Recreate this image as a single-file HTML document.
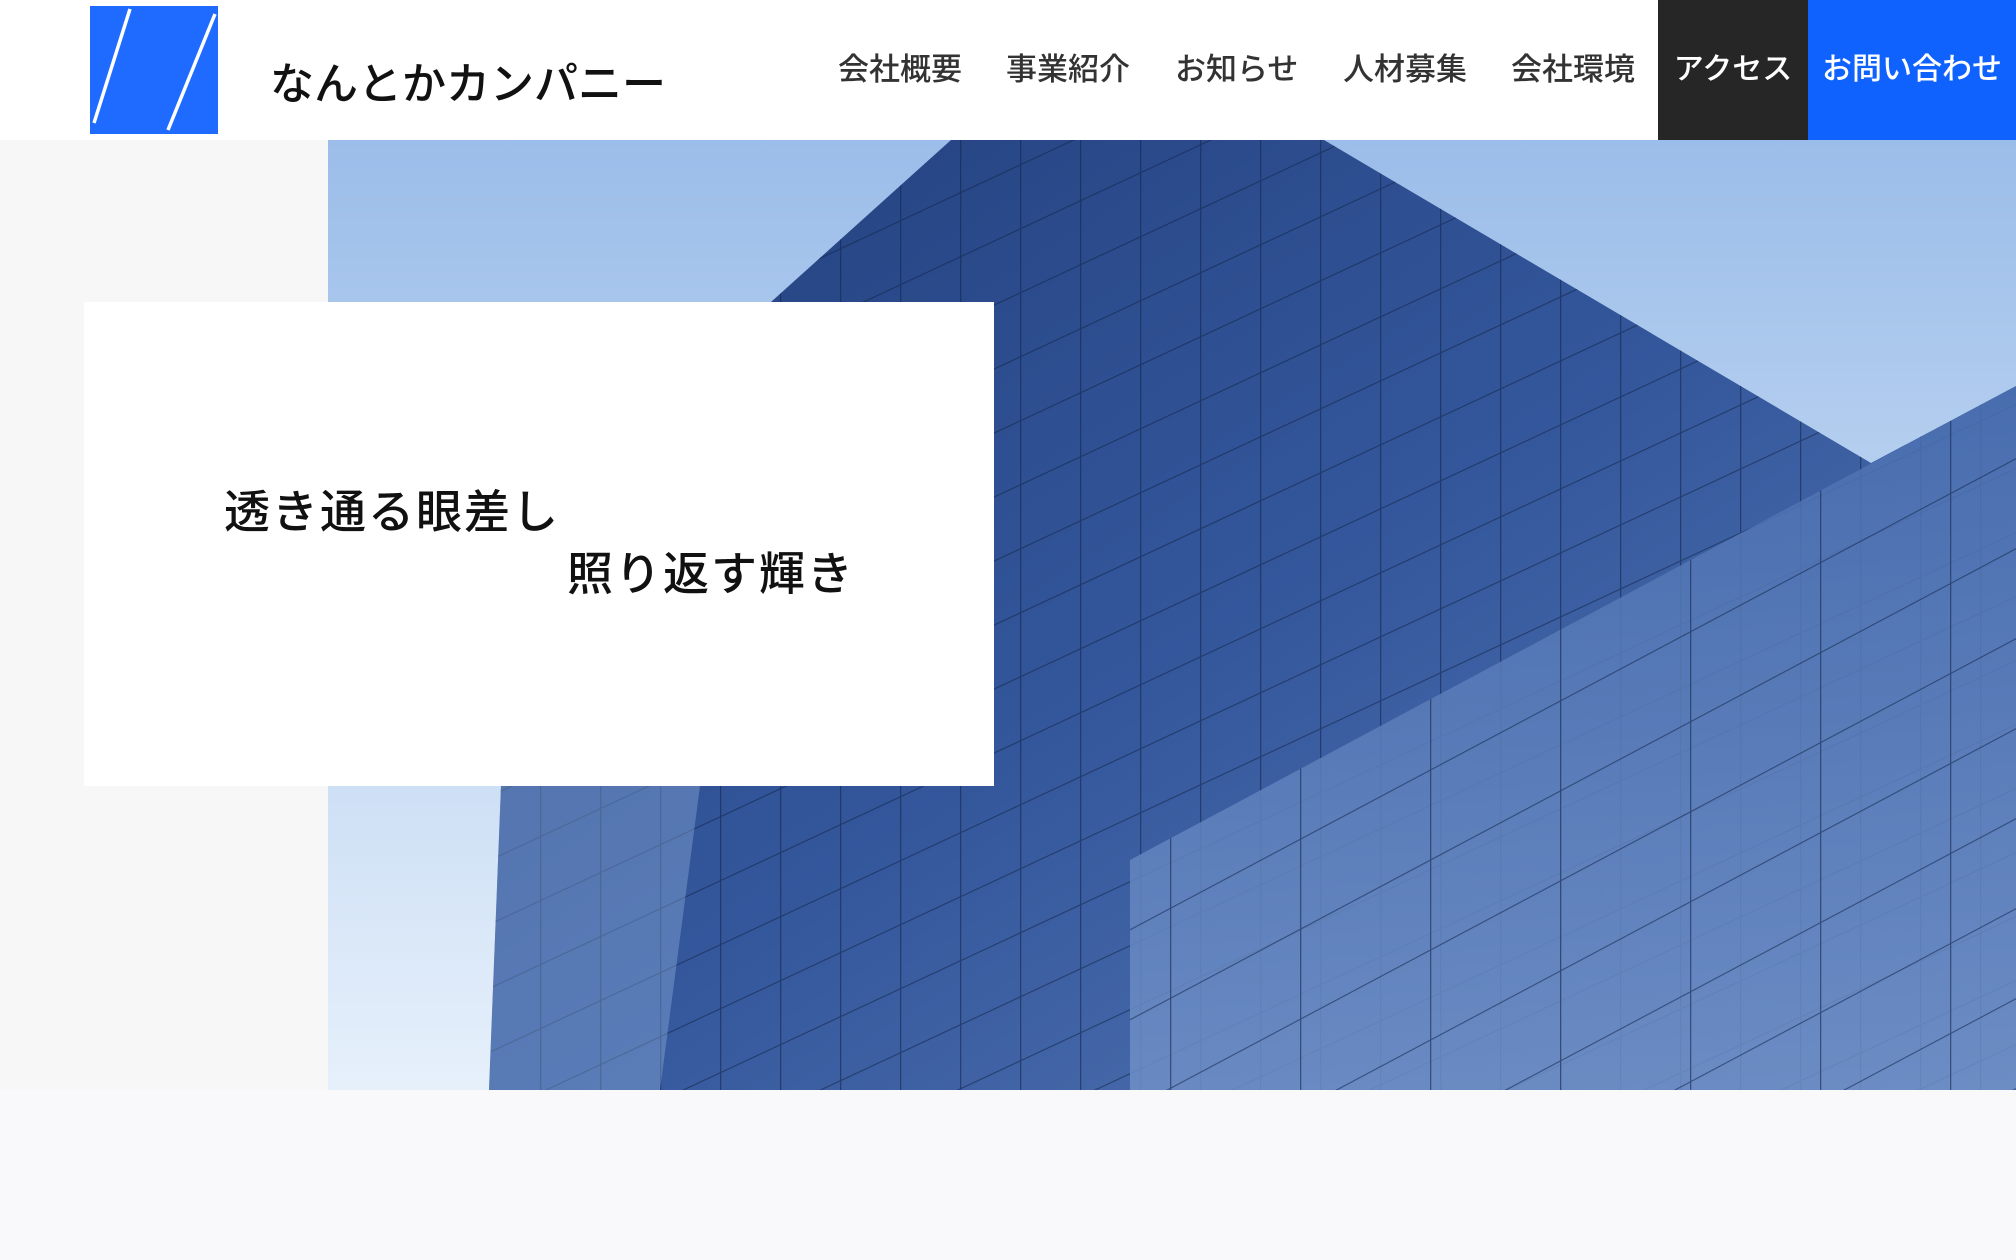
<!DOCTYPE html>
<html><head><meta charset="utf-8"><style>
*{margin:0;padding:0;box-sizing:border-box}
body{width:2016px;height:1260px;overflow:hidden;background:#f9f9fb;font-family:"Liberation Sans","Noto Sans CJK JP",sans-serif;position:relative}
header{position:absolute;left:0;top:0;width:2016px;height:140px;background:#fff}
.logo{position:absolute;left:90px;top:6px;width:128px;height:128px;background:#1f6bff}
.name{position:absolute;left:270px;top:48px;font-size:44px;color:#111;font-weight:500}
.nav{position:absolute;top:0;height:140px;line-height:140px;font-size:31px;color:#333;font-weight:500}
.hero{position:absolute;left:0;top:140px;width:2016px;height:950px;background:#f7f7f8}
.box{position:absolute;left:84px;top:162px;width:910px;height:484px;background:#fff}
.t{position:absolute;font-size:46px;color:#111;letter-spacing:2px;font-weight:500}
</style></head><body>
<header>
<div class="logo"><svg width="128" height="128"><line x1="40" y1="3" x2="4" y2="117" stroke="#fff" stroke-width="3.5"/><line x1="125" y1="8" x2="78" y2="124" stroke="#fff" stroke-width="3.5"/></svg></div>
<div class="name">なんとかカンパニー</div>
<div class="nav" style="left:838px">会社概要</div>
<div class="nav" style="left:1006px">事業紹介</div>
<div class="nav" style="left:1175px">お知らせ</div>
<div class="nav" style="left:1343px">人材募集</div>
<div class="nav" style="left:1511px">会社環境</div>
<div class="nav" style="left:1658px;width:150px;background:#262626;color:#fff;text-align:center;font-size:30px">アクセス</div>
<div class="nav" style="left:1808px;width:208px;background:#0f62fe;color:#fff;text-align:center;font-size:30px">お問い合わせ</div>
</header>
<div class="hero">
<svg style="position:absolute;left:328px;top:0" width="1688" height="950" viewBox="328 140 1688 950">
<defs>
<linearGradient id="sky" x1="0" y1="0" x2="0" y2="1"><stop offset="0" stop-color="#9bbde9"/><stop offset="1" stop-color="#e6f0fb"/></linearGradient>
<linearGradient id="b1" x1="0" y1="0" x2="1" y2="1"><stop offset="0" stop-color="#223f7c"/><stop offset="0.5" stop-color="#34579c"/><stop offset="1" stop-color="#5a7cb8"/></linearGradient>
<linearGradient id="b2" x1="0" y1="0" x2="0" y2="1"><stop offset="0" stop-color="#4a6fb0"/><stop offset="1" stop-color="#6f8fc6"/></linearGradient>
<pattern id="g" width="60" height="64" patternUnits="userSpaceOnUse" patternTransform="skewY(-25)"><path d="M0 0H60M0 0V64" stroke="#14264d" stroke-width="2.5" fill="none"/></pattern>
<pattern id="g2" width="130" height="90" patternUnits="userSpaceOnUse" patternTransform="skewY(-28)"><path d="M0 0H130M0 0V90" stroke="#14264d" stroke-width="2.5" fill="none"/></pattern>
</defs>
<rect x="328" y="140" width="1688" height="950" fill="url(#sky)"/>
<polygon points="771,302 951,140 1324,140 1871,463 2016,386 2016,1090 489,1090 501,786" fill="url(#b1)"/>
<polygon points="771,302 951,140 1324,140 1871,463 2016,386 2016,1090 489,1090 501,786" fill="url(#g)" opacity="0.6"/>
<polygon points="1130,860 2016,386 2016,1090 1130,1090" fill="url(#b2)" opacity="0.85"/>
<polygon points="1130,860 2016,386 2016,1090 1130,1090" fill="url(#g2)" opacity="0.6"/>
<polygon points="489,1090 501,786 700,786 660,1090" fill="#8eaedd" opacity="0.4"/>
</svg>
<div class="box"></div>
<div class="t" style="left:224px;top:336px">透き通る眼差し</div>
<div class="t" style="left:567px;top:398px">照り返す輝き</div>
</div>
</body></html>
